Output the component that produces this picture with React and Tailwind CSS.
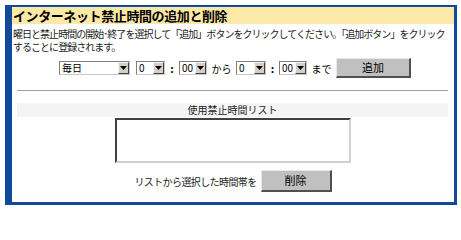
import React from 'react';

const jp = { fontFamily: '"Noto Sans CJK JP", "Noto Sans", sans-serif' };

const Select = ({ value, width }) => (
  <div
    className={`flex h-[14px] items-stretch border border-[#808080] border-b-[#c8c8c8] border-r-[#c8c8c8] bg-white ${width}`}
  >
    <div className="flex flex-1 items-center pl-[2px] text-[10px] leading-none text-black">{value}</div>
    <div className="flex w-[11px] items-center justify-center border border-[#f4f4f4] border-b-[#404040] border-r-[#404040] bg-[#d4d0c8]">
      <svg width="7" height="4" viewBox="0 0 7 4">
        <path d="M0 0h7L3.5 4z" fill="#000" />
      </svg>
    </div>
  </div>
);

const Button = ({ children, className }) => (
  <button
    className={`border-l border-t border-[#e8e8e8] border-b-2 border-r-2 border-b-[#505050] border-r-[#505050] bg-[#c0c0c0] text-[11px] leading-none text-black ${className}`}
  >
    {children}
  </button>
);

const App = () => {
  return (
    <div className="w-[461px] h-[210px] bg-white p-[5px]" style={jp}>
      <div className="flex h-[200px] w-[452px] flex-col border-b-[3px] border-l-[7px] border-r-[3px] border-t-2 border-[#114a9c] bg-white">
        <div className="h-[17px] bg-[#fde9a7] pl-[1px] text-[13px] font-bold leading-[17px] tracking-[-0.4px] text-black">
          インターネット禁止時間の追加と削除
        </div>

        <div className="whitespace-nowrap pl-[1px] pt-[3px] text-[10px] leading-[13px] tracking-[-0.97px] text-[#222]">
          <div>曜日と禁止時間の開始･終了を選択して「追加」ボタンをクリックしてください。「追加ボタン」をクリック</div>
          <div>することに登録されます。</div>
        </div>

        <div className="mt-[5px] flex h-[20px] items-center pl-[47px] text-[10px] text-black">
          <Select value="毎日" width="w-[71px]" />
          <div className="w-[6px]" />
          <Select value="0" width="w-[29px]" />
          <div className="w-[14px] text-center text-[11px] font-bold">:</div>
          <Select value="00" width="w-[28px]" />
          <div className="w-[29px] text-center">から</div>
          <Select value="0" width="w-[30px]" />
          <div className="w-[13px] text-center text-[11px] font-bold">:</div>
          <Select value="00" width="w-[28px]" />
          <div className="w-[29px] text-center">まで</div>
          <Button className="h-[20px] w-[75px]">追加</Button>
        </div>

        <div className="ml-[5px] mr-[6px] mt-[12px] h-px bg-[#a0a0a0]" />

        <div className="ml-[5px] mr-[6px] mt-[12px] h-[14px] bg-[#f4f4f4] text-center text-[10px] leading-[14px] text-[#222]">
          使用禁止時間リスト
        </div>

        <div className="mx-auto mt-px h-[45px] w-[236px] border-2 border-[#404040] border-b-[#d4d0c8] border-r-[#d4d0c8] bg-white" />

        <div className="mt-[7px] flex items-center justify-center gap-[4px] text-[10px] text-[#222]">
          <span className="tracking-[-0.6px]">リストから選択した時間帯を</span>
          <Button className="h-[22px] w-[71px]">削除</Button>
        </div>
      </div>
    </div>
  );
};

export default App;
